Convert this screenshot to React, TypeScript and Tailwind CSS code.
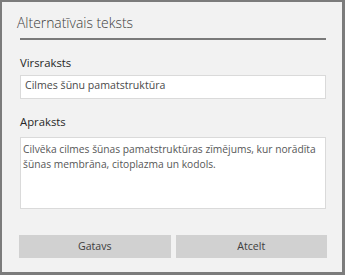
import React from "react";

export default function App() {
  return (
    <div
      className="w-[345px] h-[275px] bg-[#f2f2f2] border-[#7c7c7c] border-t-2 border-l-2 border-r-[3px] border-b-[3px] flex flex-col pl-[18px] pr-[16px]"
      style={{ fontFamily: '"Open Sans", "Noto Sans", sans-serif' }}
    >
      <div className="pt-[11px] h-[31px] leading-[20px] text-[13.9px] font-light text-[#3c3c3c] -ml-[3px]">
        Alternatīvais teksts
      </div>
      <div className="mt-[5px] h-[2px] bg-[#7a7a7a]" />
      <div className="mt-[15px] h-[16px] leading-[16px] text-[11.3px] text-[#262626]">Virsraksts</div>
      <div className="mt-[4px] h-[24px] bg-white border border-[#dadada] px-[4px] pb-[2px] flex items-center text-[10.6px] text-[#4a4a4a]">
        Cilmes šūnu pamatstruktūra
      </div>
      <div className="mt-[15px] h-[16px] leading-[16px] text-[11.3px] text-[#262626]">Apraksts</div>
      <div className="mt-[7px] h-[72px] bg-white border border-[#dadada] px-[2px] pt-[4px] text-[10.25px] leading-[14.5px] text-[#575757]">
        Cilvēka cilmes šūnas pamatstruktūras zīmējums, kur norādīta šūnas membrāna, citoplazma un kodols.
      </div>
      <div className="mt-[26px] -mx-px grid grid-cols-2 gap-[5px]">
        <button className="h-[23px] bg-[#d1d1d1] text-[10.6px] text-[#3d3d3d]">Gatavs</button>
        <button className="h-[23px] bg-[#d1d1d1] text-[10.6px] text-[#3d3d3d]">Atcelt</button>
      </div>
    </div>
  );
}
